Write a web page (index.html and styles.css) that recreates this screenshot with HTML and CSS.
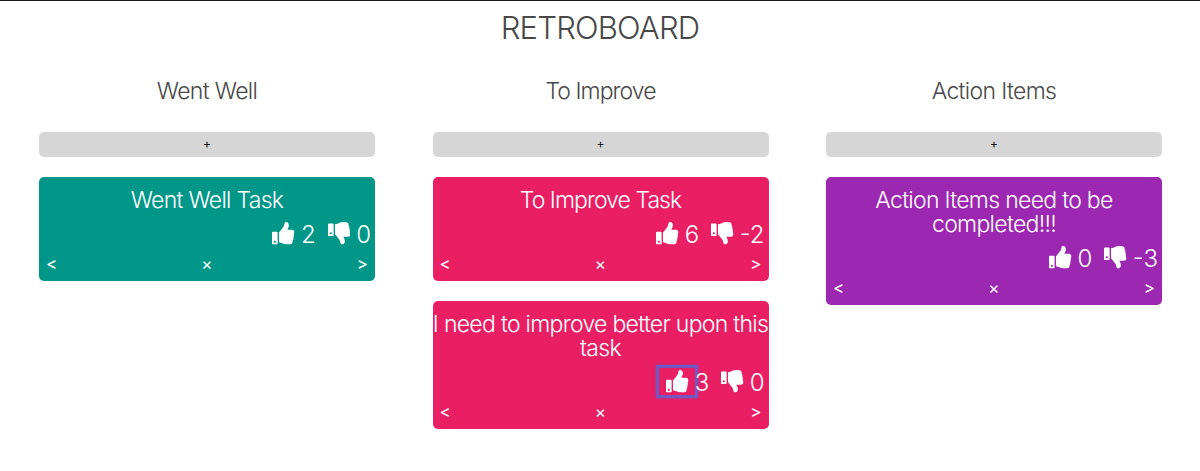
FILE: index.html
```html
<!DOCTYPE html>
<html lang="en">
<head>
<meta charset="utf-8">
<title>Retroboard</title>
<link rel="stylesheet" href="styles.css">
</head>
<body>
<svg class="sprite" aria-hidden="true">
  <symbol id="up" viewBox="0 0 512 512"><path d="M104 224H24c-13.255 0-24 10.745-24 24v240c0 13.255 10.745 24 24 24h80c13.255 0 24-10.745 24-24V248c0-13.255-10.745-24-24-24zM64 472c-13.255 0-24-10.745-24-24s10.745-24 24-24 24 10.745 24 24-10.745 24-24 24zM384 81.452c0 42.416-25.97 66.208-33.277 94.548h101.723c33.397 0 59.397 27.746 59.553 58.098.084 17.938-7.546 37.249-19.439 49.197l-.11.11c9.836 23.337 8.237 56.037-9.308 79.469 8.681 25.895-.069 57.704-16.382 74.757 4.298 17.598 2.244 32.575-6.148 44.632C440.202 511.587 389.616 512 346.839 512l-2.845-.001c-48.287-.017-87.806-17.598-119.56-31.725-15.957-7.099-36.821-15.887-52.651-16.178-6.54-.12-11.783-5.457-11.783-11.998v-213.77c0-3.2 1.282-6.271 3.558-8.521 39.614-39.144 56.648-80.587 89.117-113.111 14.804-14.832 20.188-37.236 25.393-58.902C282.515 39.293 291.817 0 312 0c24 0 72 8 72 81.452z"/></symbol>
  <symbol id="down" viewBox="0 0 512 512"><path d="M0 56v240c0 13.255 10.745 24 24 24h80c13.255 0 24-10.745 24-24V56c0-13.255-10.745-24-24-24H24C10.745 32 0 42.745 0 56zm40 200c0-13.255 10.745-24 24-24s24 10.745 24 24-10.745 24-24 24-24-10.745-24-24zm272 256c-20.183 0-29.485-39.293-33.931-57.795-5.206-21.666-10.589-44.07-25.393-58.902-32.469-32.524-49.503-73.967-89.117-113.111a11.98 11.98 0 0 1-3.558-8.521V59.901c0-6.541 5.243-11.878 11.783-11.998 15.831-.29 36.694-9.079 52.651-16.178C256.189 17.598 295.709.017 343.995 0h2.844c42.777 0 93.363.413 113.774 29.737 8.392 12.057 10.446 27.034 6.148 44.632 16.312 17.053 25.063 48.863 16.382 74.757 17.544 23.432 19.143 56.132 9.308 79.469l.11.11c11.893 11.949 19.523 31.259 19.439 49.197-.156 30.352-26.157 58.098-59.553 58.098H350.723C358.03 364.34 384 388.132 384 430.548 384 504 336 512 312 512z"/></symbol>
</svg>
<h1 class="title">RETROBOARD</h1>
<main class="board">
  <section class="column">
    <h2 class="heading">Went Well</h2>
    <button class="add">+</button>
    <article class="card teal">
      <p class="text">Went Well Task</p>
      <div class="votes"><button class="vote"><svg class="icon"><use href="#up"/></svg></button><span class="count">2</span><button class="vote"><svg class="icon"><use href="#down"/></svg></button><span class="count">0</span></div>
      <div class="actions"><button class="act">&lt;</button><button class="act">×</button><button class="act">&gt;</button></div>
    </article>
  </section>
  <section class="column">
    <h2 class="heading tight">To Improve</h2>
    <button class="add">+</button>
    <article class="card pink">
      <p class="text tight">To Improve Task</p>
      <div class="votes"><button class="vote"><svg class="icon"><use href="#up"/></svg></button><span class="count">6</span><button class="vote"><svg class="icon"><use href="#down"/></svg></button><span class="count">-2</span></div>
      <div class="actions"><button class="act">&lt;</button><button class="act">×</button><button class="act">&gt;</button></div>
    </article>
    <article class="card pink">
      <p class="text">I need to improve better upon this<br>task</p>
      <div class="votes"><button class="vote focused"><svg class="icon"><use href="#up"/></svg></button><span class="count">3</span><button class="vote"><svg class="icon"><use href="#down"/></svg></button><span class="count">0</span></div>
      <div class="actions"><button class="act">&lt;</button><button class="act">×</button><button class="act">&gt;</button></div>
    </article>
  </section>
  <section class="column">
    <h2 class="heading">Action Items</h2>
    <button class="add">+</button>
    <article class="card purple">
      <p class="text">Action Items need to be<br>completed!!!</p>
      <div class="votes"><button class="vote"><svg class="icon"><use href="#up"/></svg></button><span class="count">0</span><button class="vote"><svg class="icon"><use href="#down"/></svg></button><span class="count">-3</span></div>
      <div class="actions"><button class="act">&lt;</button><button class="act">×</button><button class="act">&gt;</button></div>
    </article>
  </section>
</main>
</body>
</html>
```
FILE: styles.css
```css
* { box-sizing: border-box; }
body {
  margin: 0;
  height: 471px;
  overflow: hidden;
  border-top: 1px solid #1c1a1c;
  background: #fff;
  color: #484848;
  font-family: Inter, "Liberation Sans", sans-serif;
  font-weight: 300;
}
.sprite { display: none; }
button {
  border: 0;
  padding: 0;
  background: none;
  color: inherit;
  font: inherit;
}
.title {
  margin: 0;
  padding-top: 7px;
  line-height: 40px;
  font-size: 31px;
  font-weight: 300;
  letter-spacing: -0.8px;
  text-align: center;
}
.board {
  display: grid;
  grid-template-columns: repeat(3, 336px);
  justify-content: space-between;
  padding: 28px 38px 0 39px;
}
.heading {
  margin: 0 0 26px;
  line-height: 30px;
  font-size: 23px;
  font-weight: 300;
  letter-spacing: -0.65px;
  text-align: center;
}
.add {
  display: block;
  width: 100%;
  height: 25px;
  margin-bottom: 20px;
  padding-bottom: 2px;
  border-radius: 5px;
  background: #d6d6d6;
  color: #111;
  font-size: 12px;
  font-weight: 400;
  line-height: 23px;
}
.card {
  margin-bottom: 20px;
  padding-top: 11px;
  border-radius: 5px;
  color: #fff;
}
.teal { background: #009688; }
.pink { background: #e91e63; }
.purple { background: #9c27b0; }
.text {
  margin: 0;
  line-height: 24px;
  font-size: 23px;
  letter-spacing: -0.7px;
  text-align: center;
  white-space: nowrap;
}
.tight { letter-spacing: -0.95px; }
.votes {
  display: flex;
  justify-content: flex-end;
  align-items: center;
  height: 43px;
  padding-right: 4px;
}
.vote {
  display: flex;
  margin-left: 5px;
  padding: 2px 6px 2px 7px;
}
.icon {
  width: 22.5px;
  height: 22.5px;
  fill: currentColor;
}
.focused { box-shadow: 0 0 0 3px #7457c0, 0 0 2px 3px #7457c0; }
.count {
  padding-top: 2px;
  font-size: 24px;
  line-height: 41px;
}
.actions {
  display: grid;
  grid-template-columns: 1fr 1fr 1fr;
  height: 26px;
  padding: 0 7px;
}
.act {
  height: 18px;
  font-size: 17px;
  font-weight: 400;
  line-height: 18px;
  text-align: center;
}
.act:first-child { text-align: left; }
.act:last-child { text-align: right; }
```
